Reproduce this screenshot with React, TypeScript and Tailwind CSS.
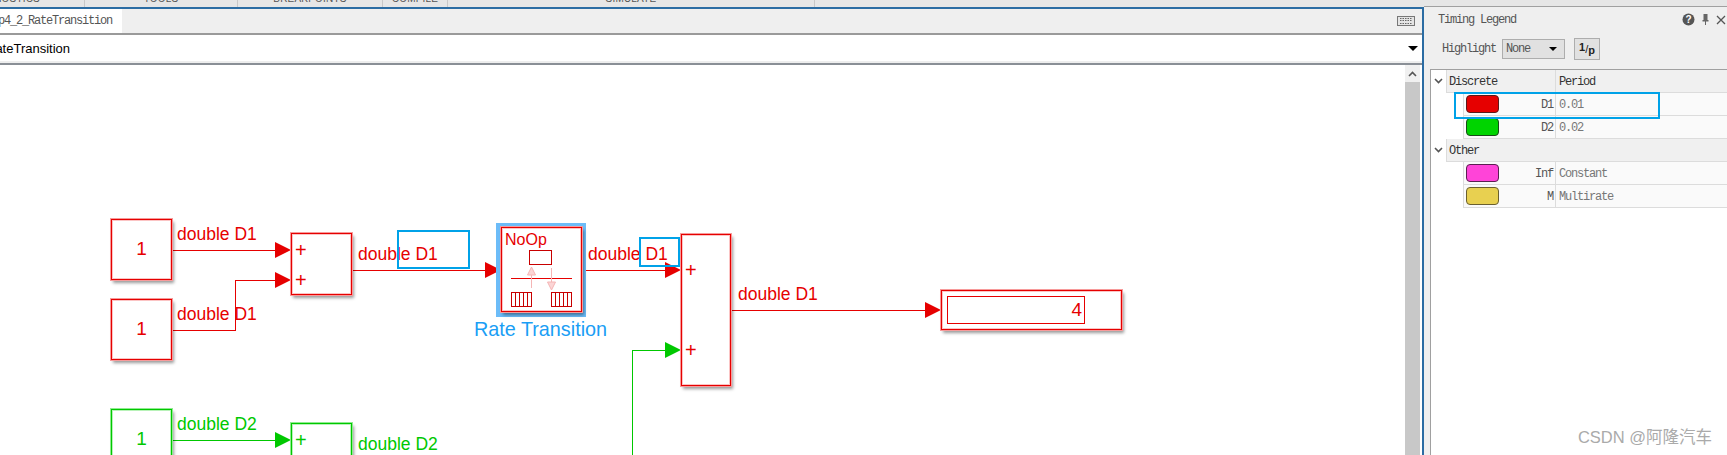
import React from "react";

const MONO = "font-['Liberation_Mono',monospace] text-[12px] tracking-[-1.2px] leading-none";

function Block({ className, children }: { className: string; children?: React.ReactNode }) {
  return (
    <div
      className={`absolute bg-white border outline outline-1 flex items-center justify-center font-['Liberation_Sans',sans-serif] ${className}`}
    >
      {children}
    </div>
  );
}

function Label({ className, children }: { className: string; children: React.ReactNode }) {
  return (
    <span className={`absolute whitespace-nowrap font-['Liberation_Sans',sans-serif] text-[17.5px] leading-[20px] ${className}`}>
      {children}
    </span>
  );
}

function Plus({ className }: { className: string }) {
  return <span className={`absolute font-['Liberation_Sans',sans-serif] text-[20px] leading-[20px] text-[#e60000] ${className}`}>+</span>;
}

function Arrow({ x, y, color }: { x: number; y: number; color: string }) {
  return <polygon points={`${x - 16},${y - 8} ${x},${y} ${x - 16},${y + 8}`} fill={color} />;
}

function Wires() {
  const red = "#e60000";
  const green = "#00c800";
  return (
    <svg className="absolute left-0 top-0" width="1405" height="390" viewBox="0 65 1405 390">
      <g fill="none" strokeWidth="1" shapeRendering="crispEdges">
        <path d="M172 250.500H280" stroke={red} />
        <path d="M172 330.500H235.500V280.500H280" stroke={red} />
        <path d="M352 270.500H490" stroke={red} />
        <path d="M582 270.500H670" stroke={red} />
        <path d="M731 310.500H930" stroke={red} />
        <path d="M172 440.500H280" stroke={green} />
        <path d="M632.500 455V350.500H670" stroke={green} />
      </g>
      <Arrow x={291} y={250} color={red} />
      <Arrow x={291} y={280} color={red} />
      <Arrow x={501} y={270} color={red} />
      <Arrow x={681} y={270} color={red} />
      <Arrow x={941} y={310} color={red} />
      <Arrow x={291} y={440} color={green} />
      <Arrow x={681} y={350} color={green} />
    </svg>
  );
}

function RateIcon() {
  return (
    <svg className="absolute left-[9px] top-[22px]" width="64" height="62" viewBox="0 0 64 62">
      <g fill="none" stroke="#c80000" strokeWidth="1" shapeRendering="crispEdges">
        <rect x="18.500" y="0.500" width="22" height="14" />
        <path d="M0 28.500H61" stroke="#e60000" />
        <rect x="0.500" y="42.500" width="20" height="14" />
        <path d="M4.500 43V56M8.500 43V56M12.500 43V56M16.500 43V56" />
        <rect x="40.500" y="42.500" width="20" height="14" />
        <path d="M44.500 43V56M48.500 43V56M52.500 43V56M56.500 43V56" />
      </g>
      <path d="M20.500 25V38" stroke="#f5b5b5" />
      <polygon points="20.500,17 16.500,25 24.500,25" fill="#fbd5d5" stroke="#f5b5b5" />
      <path d="M40.500 18V32" stroke="#f5b5b5" />
      <polygon points="40.500,40 36.500,32 44.500,32" fill="#fbd5d5" stroke="#f5b5b5" />
    </svg>
  );
}

function Chevron({ className }: { className: string }) {
  return (
    <svg className={className} width="9" height="6" viewBox="0 0 9 6">
      <path d="M1 1l3.500 3.500L8 1" fill="none" stroke="#555" strokeWidth="1.600" />
    </svg>
  );
}

function Header({ name, period }: { name: string; period?: string }) {
  return (
    <div className="flex h-[23px] items-stretch">
      <div className="w-[15px] flex items-center justify-center shrink-0">
        <Chevron className="-mt-[2px]" />
      </div>
      <div className="flex flex-1 bg-[#f0f0f0] border-b border-l border-[#dcdcdc] items-center">
        <div className={`w-[109px] h-full flex items-center pl-[2px] pt-[1px] text-[#333] ${MONO} ${period ? "border-r border-[#dcdcdc]" : ""}`}>{name}</div>
        {period && <div className={`pl-[3px] pt-[1px] text-[#333] ${MONO}`}>{period}</div>}
      </div>
    </div>
  );
}

function Row({ color, edge, code, value }: { color: string; edge: string; code: string; value: string }) {
  return (
    <div className="flex h-[23px] items-stretch">
      <div className="w-[32px] shrink-0" />
      <div className="flex flex-1 bg-[#fafafa] border-b border-l border-[#dcdcdc] items-center">
        <div className="w-[92px] h-full flex items-center justify-between pl-[2px] pr-[2px] border-r border-[#dcdcdc]">
          <div className={`w-[33px] h-[18px] rounded-[4px] border ${color} ${edge}`} />
          <span className={`pt-[2px] text-[#555] ${MONO}`}>{code}</span>
        </div>
        <span className={`pl-[3px] pt-[2px] text-[#777] ${MONO}`}>{value}</span>
      </div>
    </div>
  );
}

function RibbonSection({ w, text }: { w: string; text: string }) {
  return (
    <div className={`${w} h-[7px] overflow-hidden border-r border-[#c8c8c8] flex justify-center shrink-0`}>
      <span className="font-['Liberation_Sans',sans-serif] text-[10px] leading-none -mt-[6px] text-[#555] tracking-[0.2px] whitespace-nowrap">{text}</span>
    </div>
  );
}

export default function App() {
  const red = "border-[#e60000] outline-[#f79a9a] text-[#e60000] shadow-[2px_3px_3px_rgba(0,0,0,0.4),inset_0_0_0_1px_#fbc4c4]";
  const green = "border-[#00c800] outline-[#90ec90] text-[#00c800] shadow-[2px_3px_3px_rgba(0,0,0,0.4),inset_0_0_0_1px_#b8f2b8]";
  return (
    <div className="relative w-[1727px] h-[455px] overflow-hidden bg-[#e6e6e6] flex flex-col">
      {/* ribbon strip */}
      <div className="flex h-[6px] overflow-visible z-10 shrink-0">
        <div className="w-[85px] h-[7px] overflow-hidden border-r border-[#c8c8c8] flex justify-end pr-[44px] shrink-0">
          <span className="font-['Liberation_Sans',sans-serif] text-[10px] leading-none -mt-[6px] text-[#555] tracking-[0.2px]">NOSTICS</span>
        </div>
        <RibbonSection w="w-[153px]" text="TOOLS" />
        <RibbonSection w="w-[145px]" text="BREAKPOINTS" />
        <RibbonSection w="w-[65px]" text="COMPILE" />
        <RibbonSection w="w-[367px]" text="SIMULATE" />
      </div>

      <div className="flex flex-1 min-h-0 items-stretch">
        {/* editor */}
        <div className="w-[1424px] mt-[1px] border-t-2 border-r-2 border-[#2b6ca3] flex flex-col min-h-0 bg-white">
          <div className="h-[24px] bg-[#efefef] flex items-stretch justify-between shrink-0">
            <div className={`w-[122px] bg-white overflow-hidden flex items-center justify-end pr-[10px] text-[#555] ${MONO}`}>
              <span className="whitespace-nowrap">p4_2_RateTransition</span>
            </div>
            <svg className="mr-[7px] self-center" width="18" height="10" viewBox="0 0 18 10">
              <rect x="0.500" y="0.500" width="17" height="9" fill="#e4e4e4" stroke="#777" />
              <path d="M3 2.500h12M3 4.500h12M3 7.500h12" stroke="#666" strokeDasharray="1.500 1" />
            </svg>
          </div>
          <div className="h-[2px] bg-[#9a9a9a] shrink-0" />
          <div className="h-[28px] border-t border-b-2 border-t-white border-b-[#eeeeee] bg-white flex items-center justify-between shrink-0">
            <span className="font-['Liberation_Sans',sans-serif] text-[13px] text-black -ml-[14px] whitespace-nowrap">RateTransition</span>
            <svg className="mr-[4px]" width="10" height="5" viewBox="0 0 10 5">
              <polygon points="0,0 10,0 5,5" fill="#000" />
            </svg>
          </div>
          <div className="h-[2px] bg-[#8a8f96] shrink-0" />

          <div className="flex-1 relative overflow-hidden bg-white">
            <Wires />
            <Block className={`left-[111px] top-[154px] w-[61px] h-[61px] text-[19px] ${red}`}>1</Block>
            <Block className={`left-[111px] top-[234px] w-[61px] h-[61px] text-[19px] ${red}`}>1</Block>
            <Block className={`left-[291px] top-[168px] w-[61px] h-[62px] ${red}`} />
            <Plus className="left-[295px] top-[175px]" />
            <Plus className="left-[295px] top-[205px]" />
            <Label className="left-[177px] top-[159px] text-[#e60000]">double D1</Label>
            <Label className="left-[177px] top-[239px] text-[#e60000]">double D1</Label>
            <Label className="left-[358px] top-[179px] text-[#e60000]">double D1</Label>

            <Block className={`left-[111px] top-[344px] w-[61px] h-[61px] text-[19px] ${green}`}>1</Block>
            <Block className={`left-[291px] top-[358px] w-[61px] h-[62px] ${green}`} />
            <span className="absolute left-[295px] top-[365px] font-['Liberation_Sans',sans-serif] text-[20px] leading-[20px] text-[#00c800]">+</span>
            <Label className="left-[177px] top-[349px] text-[#00c800]">double D2</Label>
            <Label className="left-[358px] top-[369px] text-[#00c800]">double D2</Label>

            {/* rate transition */}
            <div className="absolute left-[496px] top-[158px] w-[90px] h-[94px] bg-[#6cbcf8]" />
            <Block className={`left-[501px] top-[162px] w-[81px] h-[85px] ${red}`}>
              <span className="absolute left-[3px] top-[2px] text-[16px] leading-[20px]">NoOp</span>
              <RateIcon />
            </Block>
            <span className="absolute left-[474px] top-[252px] font-['Liberation_Sans',sans-serif] text-[19.800px] leading-[24px] text-[#1a9ef5] whitespace-nowrap">Rate Transition</span>
            <Label className="left-[588px] top-[179px] text-[#e60000]">double D1</Label>

            <Block className={`left-[681px] top-[169px] w-[50px] h-[152px] ${red}`} />
            <Plus className="left-[685px] top-[195px]" />
            <Plus className="left-[685px] top-[275px]" />
            <Label className="left-[738px] top-[219px] text-[#e60000]">double D1</Label>

            <Block className={`left-[941px] top-[225px] w-[181px] h-[40px] ${red}`}>
              <div className="absolute left-[5px] top-[5px] w-[138px] h-[28px] border border-[#e60000] flex items-center justify-end pr-[2px] text-[19px]">4</div>
            </Block>

            {/* annotation rectangles */}
            <div className="absolute left-[397px] top-[165px] w-[73px] h-[39px] border-2 border-[#00a2e8]" />
            <div className="absolute left-[639px] top-[172px] w-[41px] h-[30px] border-2 border-[#00a2e8]" />

            {/* scrollbar */}
            <div className="absolute right-[2px] top-0 bottom-0 w-[15px] flex flex-col bg-[#f0f0f0]">
              <div className="h-[17px] flex items-center justify-center">
                <svg width="9" height="6" viewBox="0 0 9 6">
                  <path d="M1 5l3.500-3.500L8 5" fill="none" stroke="#555" strokeWidth="1.600" />
                </svg>
              </div>
              <div className="flex-1 bg-[#c8c8c8]" />
            </div>
          </div>
        </div>

        {/* timing legend */}
        <div className="flex-1 border-t border-[#a0a0a0] bg-[#efefef] flex flex-col min-h-0 relative">
          <div className="h-[25px] flex items-center justify-between pl-[14px] pr-[1px] shrink-0">
            <span className={`text-[#555] ${MONO}`}>Timing Legend</span>
            <div className="flex items-center gap-[7px]">
              <svg width="13" height="13" viewBox="0 0 13 13">
                <circle cx="6.500" cy="6.500" r="6" fill="#555" />
                <text x="6.500" y="10" textAnchor="middle" fontSize="10" fontWeight="700" fill="#fff" fontFamily="Liberation Sans">?</text>
              </svg>
              <svg width="7" height="11" viewBox="0 0 7 11">
                <path d="M1.500 0h4v6h1v1.500h-2.500v3.500h-1V7.500H.5V6h1z" fill="#666" />
              </svg>
              <svg width="10" height="10" viewBox="0 0 10 10">
                <path d="M1 1l8 8M9 1l-8 8" stroke="#555" strokeWidth="1.300" />
              </svg>
            </div>
          </div>
          <div className="h-[22px] mt-[6px] flex items-center pl-[18px] shrink-0">
            <span className={`text-[#555] ${MONO}`}>Highlight</span>
            <div className="ml-[6px] w-[63px] h-[20px] bg-[#e1e1e1] border border-[#adadad] flex items-center justify-between pl-[3px] pr-[7px]">
              <span className={`text-[#555] ${MONO}`}>None</span>
              <svg width="8" height="4" viewBox="0 0 8 4"><polygon points="0,0 8,0 4,4" fill="#000" /></svg>
            </div>
            <div className="ml-[9px] w-[26px] h-[22px] bg-[#e1e1e1] border border-[#adadad] flex items-center justify-center font-['Liberation_Sans',sans-serif] font-bold text-[11px] leading-none text-[#222]">
              <span className="-mt-[3px]">1</span>
              <span className="font-normal">/</span>
              <span className="mt-[2px]">p</span>
            </div>
          </div>
          <div className="relative flex-1 mt-[9px] ml-[6px] border-t border-l border-[#a0a0a0] bg-white">
            <Header name="Discrete" period="Period" />
            <Row color="bg-[#e60000]" edge="border-[#5a1a1a]" code="D1" value="0.01" />
            <Row color="bg-[#00d400]" edge="border-[#1a4a1a]" code="D2" value="0.02" />
            <Header name="Other" />
            <Row color="bg-[#ff44d8]" edge="border-[#5a2050]" code="Inf" value="Constant" />
            <Row color="bg-[#e8d050]" edge="border-[#6a5f30]" code="M" value="Multirate" />
            <div className="absolute left-[23px] top-[22px] w-[206px] h-[27px] border-2 border-[#00a2e8]" />
            <span className="absolute right-[15px] bottom-[8px] font-['Liberation_Sans','Noto_Sans_CJK_SC',sans-serif] text-[16.500px] leading-[20px] text-[#aaaaaa] whitespace-nowrap">
              CSDN @阿隆汽车
            </span>
          </div>
        </div>
      </div>
    </div>
  );
}
